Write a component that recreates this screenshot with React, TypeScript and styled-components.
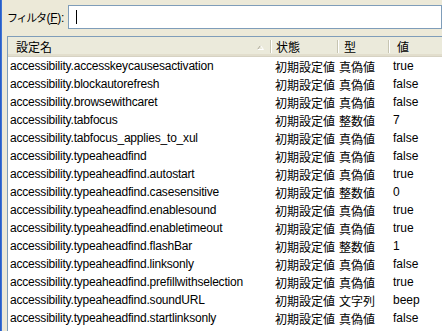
import React from "react";
import styled, { createGlobalStyle } from "styled-components";

const prefs = [
    ["accessibility.accesskeycausesactivation", "真偽値", "true"],
    ["accessibility.blockautorefresh", "真偽値", "false"],
    ["accessibility.browsewithcaret", "真偽値", "false"],
    ["accessibility.tabfocus", "整数値", "7"],
    ["accessibility.tabfocus_applies_to_xul", "真偽値", "false"],
    ["accessibility.typeaheadfind", "真偽値", "false"],
    ["accessibility.typeaheadfind.autostart", "真偽値", "true"],
    ["accessibility.typeaheadfind.casesensitive", "整数値", "0"],
    ["accessibility.typeaheadfind.enablesound", "真偽値", "true"],
    ["accessibility.typeaheadfind.enabletimeout", "真偽値", "true"],
    ["accessibility.typeaheadfind.flashBar", "整数値", "1"],
    ["accessibility.typeaheadfind.linksonly", "真偽値", "false"],
    ["accessibility.typeaheadfind.prefillwithselection", "真偽値", "true"],
    ["accessibility.typeaheadfind.soundURL", "文字列", "beep"],
    ["accessibility.typeaheadfind.startlinksonly", "真偽値", "false"],
    ["accessibility.typeaheadfind.timeout", "整数値", "5000"],
];

const App = () => {
    return (
        <>
            <GlobalStyle />
            <Window>
                <Frame />
                <Content>
                    <FilterBar>
                        <FilterLabel>
                            <Kana>フィルタ</Kana>(<u>F</u>):
                        </FilterLabel>
                        <FilterBox>
                            <Caret />
                        </FilterBox>
                    </FilterBar>

                    <ListBox>
                        <HeaderRow>
                            <HeaderCell>
                                設定名
                                <SortArrow width="7" height="5" viewBox="0 0 7 5">
                                    <path d="M0.5 4.5 L3.5 0.5" stroke="#aca899" />
                                    <path d="M3.5 0.5 L6.5 4.5" stroke="#ffffff" />
                                    <path d="M0.5 4.5 L6.5 4.5" stroke="#ffffff" />
                                </SortArrow>
                            </HeaderCell>
                            <HeaderCell pad={5}>状態</HeaderCell>
                            <HeaderCell pad={6}>型</HeaderCell>
                            <HeaderCell pad={8} last>値</HeaderCell>
                        </HeaderRow>

                        {prefs.map(([name, type, value]) => (
                            <Row key={name}>
                                <NameCell>{name}</NameCell>
                                <Cell pad={4}>初期設定値</Cell>
                                <Cell pad={1}>{type}</Cell>
                                <Cell pad={4}>{value}</Cell>
                            </Row>
                        ))}
                    </ListBox>
                </Content>
            </Window>
        </>
    );
};

export default App;

const GlobalStyle = createGlobalStyle`
    html, body {
        margin: 0;
        padding: 0;
        overflow: hidden;
        background: #ece9d8;
    }
    #root {
        height: 100vh;
    }
`;

const COLUMNS = "263px 67px 51px 1fr";

const Window = styled.div`
    display: flex;
    height: 100vh;
    font-family: "Liberation Sans", "Noto Sans CJK JP", sans-serif;
    font-size: 12px;
    color: #000;
    background: #ece9d8;
`;

const Frame = styled.div`
    width: 2px;
    flex: none;
    background: linear-gradient(to right, #1d52c0, #4a7fdc);
`;

const Content = styled.div`
    flex: 1;
    display: flex;
    flex-direction: column;
    padding: 5px 0 0 5px;
    min-width: 0;
    overflow: hidden;
`;

const FilterBar = styled.div`
    display: flex;
    align-items: center;
    height: 24px;
    margin-bottom: 7px;
`;

const FilterLabel = styled.div`
    flex: none;
    width: 61px;
    white-space: nowrap;
    letter-spacing: -0.3px;

    u {
        text-decoration: underline;
    }
`;

const Kana = styled.span`
    font-size: 11px;
    letter-spacing: -1.3px;
    margin-right: 1px;
`;

const FilterBox = styled.div`
    flex: 1;
    height: 22px;
    border: 1px solid #7f9db9;
    background: #fff;
    display: flex;
    align-items: center;
    padding-left: 7px;
`;

const Caret = styled.span`
    width: 1px;
    height: 14px;
    background: #000;
`;

const ListBox = styled.div`
    flex: 1;
    border: 1px solid #7f9db9;
    border-right: none;
    border-bottom: none;
    background: #fff;
    overflow: hidden;
`;

const HeaderRow = styled.div`
    display: grid;
    grid-template-columns: ${COLUMNS};
    height: 19px;
    background: #ebeadb;
    border-bottom: 1px solid #d6d2c2;
    box-shadow: inset 0 -2px 0 #e2decd;
`;

const HeaderCell = styled.div<{ pad?: number; last?: boolean }>`
    position: relative;
    display: flex;
    align-items: center;
    padding-left: ${({ pad }) => pad ?? 8}px;
    white-space: nowrap;

    &::after {
        content: "";
        display: ${({ last }) => (last ? "none" : "block")};
        position: absolute;
        right: 0;
        top: 3px;
        bottom: 3px;
        width: 1px;
        background: #c7c5b2;
        box-shadow: 1px 0 0 #ffffff;
    }
`;

const SortArrow = styled.svg`
    position: absolute;
    right: 7px;
    top: 8px;
`;

const Row = styled.div`
    display: grid;
    grid-template-columns: ${COLUMNS};
    height: 18px;
    align-items: center;
`;

const Cell = styled.div<{ pad?: number }>`
    padding-left: ${({ pad }) => pad ?? 4}px;
    white-space: nowrap;
`;

const NameCell = styled.div`
    padding-left: 2px;
    white-space: nowrap;
    letter-spacing: -0.2px;
`;
